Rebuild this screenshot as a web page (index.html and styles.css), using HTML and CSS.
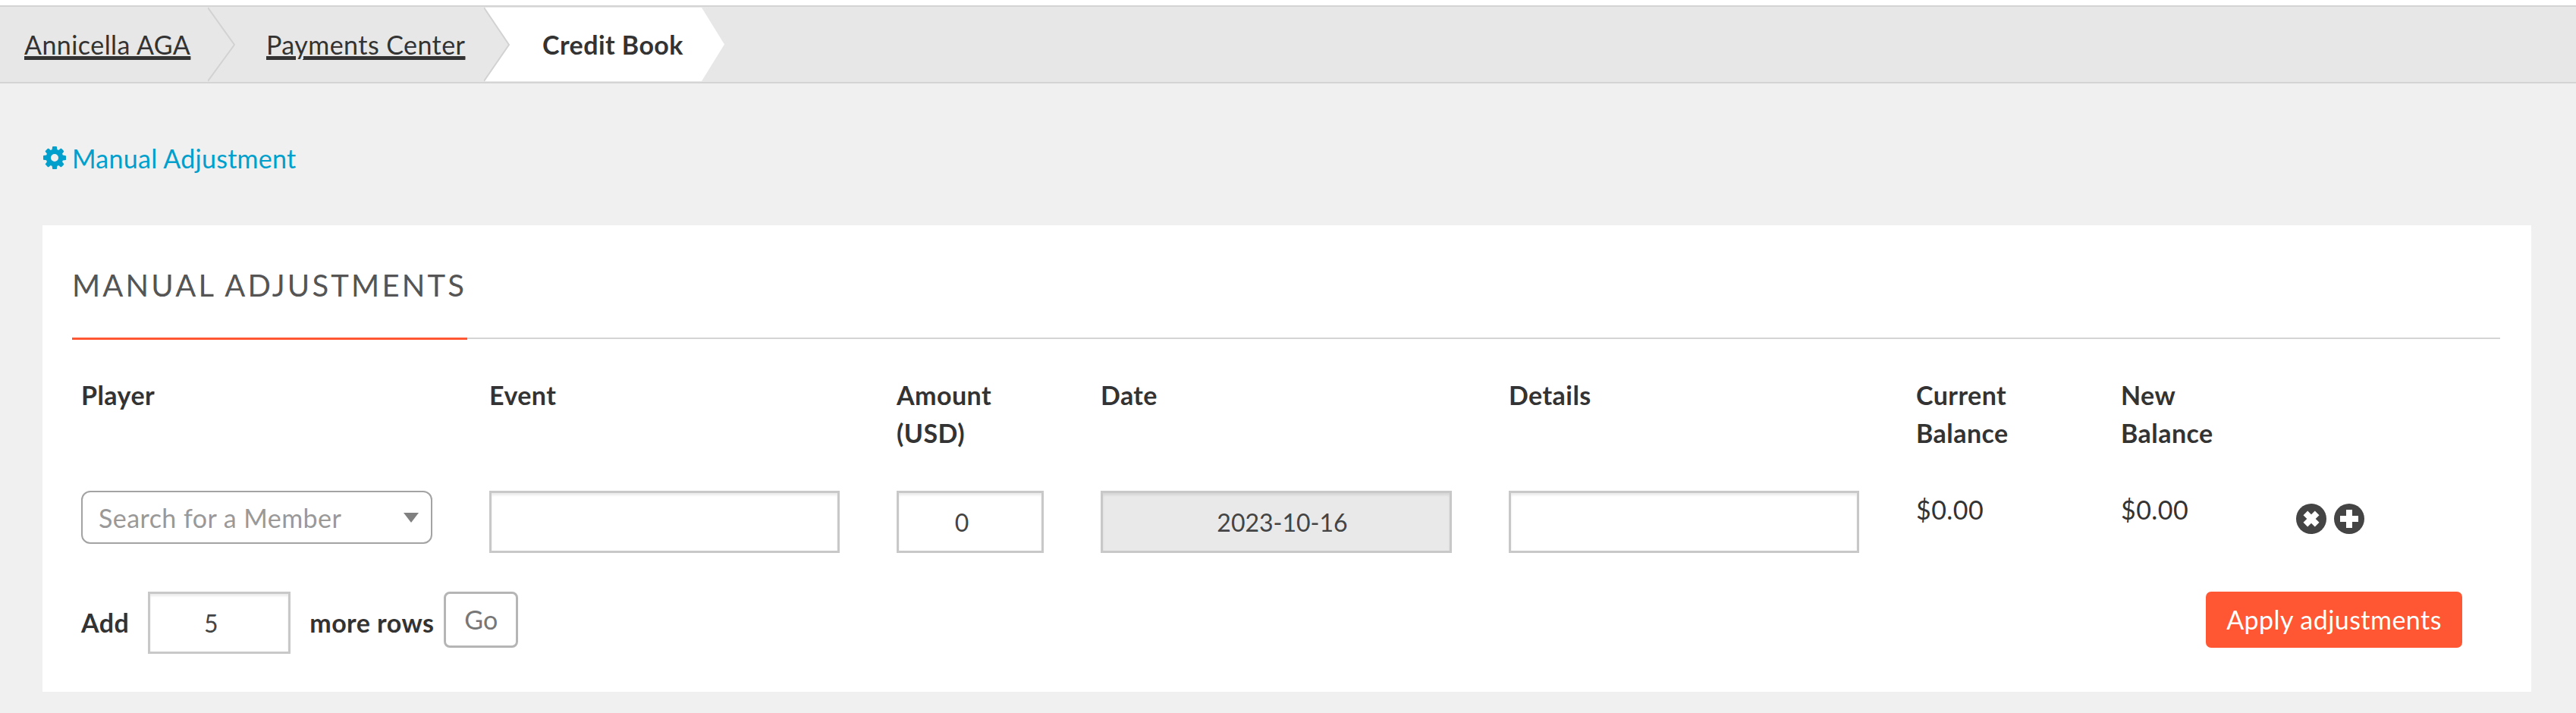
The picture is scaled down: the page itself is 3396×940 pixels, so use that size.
FILE: index.html
```html
<!DOCTYPE html>
<html lang="en">
<head>
<meta charset="utf-8">
<title>Credit Book</title>
<link rel="stylesheet" href="styles.css">
</head>
<body>
<nav class="crumbs">
  <a class="crumb crumb-first" href="#"><span class="crumb-text">Annicella AGA</span>
    <svg class="sep" viewBox="0 0 36 99" width="36" height="99"><path d="M0 1 L35 50 L0 98" fill="none" stroke="#d2d2d2" stroke-width="2"/></svg></a>
  <a class="crumb crumb-second" href="#"><span class="crumb-text">Payments Center</span>
    <svg class="sep" viewBox="0 0 36 99" width="36" height="99"><path d="M0 1 L33 50 L0 98" fill="none" stroke="#d2d2d2" stroke-width="2"/></svg></a>
  <span class="crumb-active">Credit Book</span>
</nav>
<main class="page">
  <a class="manual-link" href="#">
    <svg class="gear" viewBox="128 128 1536 1536" width="30" height="30"><path fill="currentColor" d="M1152 896q0-106-75-181t-181-75-181 75-75 181 75 181 181 75 181-75 75-181zm512-109v222q0 12-8 23t-20 13l-185 28q-19 54-39 91 35 50 107 138 10 12 10 25t-9 23q-27 37-99 108t-94 71q-12 0-26-9l-138-108q-44 23-91 38-16 136-29 186-7 28-36 28h-222q-14 0-24.5-8.5t-11.5-21.5l-28-184q-49-16-90-37l-141 107q-10 9-25 9-14 0-25-11-126-114-165-168-7-10-7-23 0-12 8-23 15-21 51-66.5t54-70.5q-27-50-41-99l-183-27q-13-2-21-12.5t-8-23.5v-222q0-12 8-23t19-13l186-28q14-46 39-92-40-57-107-138-10-12-10-24 0-10 9-23 26-36 98.5-107.5t94.5-71.5q13 0 26 10l138 107q44-23 91-38 16-136 29-186 7-28 36-28h222q14 0 24.5 8.5t11.5 21.5l28 184q49 16 90 37l142-107q9-9 24-9 13 0 25 10 129 119 165 170 7 8 7 22 0 12-8 23-15 21-51 66.5t-54 70.5q26 50 41 98l183 28q13 2 21 12.5t8 23.5z"/></svg>
    <span class="manual-text">Manual Adjustment</span>
  </a>
  <section class="card">
    <div class="title-rule"><h2 class="title">MANUAL ADJUSTMENTS</h2></div>
    <div class="grid grid-head">
      <div class="label">Player</div>
      <div class="label">Event</div>
      <div class="label">Amount<br>(USD)</div>
      <div class="label">Date</div>
      <div class="label">Details</div>
      <div class="label">Current<br>Balance</div>
      <div class="label">New<br>Balance</div>
      <div></div>
    </div>
    <div class="grid grid-row">
      <div class="select"><span class="select-text">Search for a Member</span><span class="select-arrow"></span></div>
      <input class="field" type="text" value="">
      <input class="field field-small field-num" type="text" value="0">
      <input class="field field-date" type="text" value="2023-10-16" disabled>
      <input class="field" type="text" value="">
      <div class="money">$0.00</div>
      <div class="money">$0.00</div>
      <div class="actions">
        <svg class="round-icon" viewBox="0 0 40 40" width="40" height="40"><circle cx="20" cy="20" r="20" fill="#444"/><path fill="#fff" d="M9.5 15.2l5.7-5.7L20 14.3l4.8-4.8 5.7 5.7-4.8 4.8 4.8 4.8-5.7 5.7-4.8-4.8-4.8 4.8-5.7-5.7 4.8-4.8z"/></svg>
        <svg class="round-icon" viewBox="0 0 40 40" width="40" height="40"><circle cx="20" cy="20" r="20" fill="#444"/><path fill="#fff" d="M16 8h8v8h8v8h-8v8h-8v-8H8v-8h8z"/></svg>
      </div>
    </div>
    <div class="add-row">
      <span class="label add-label">Add</span>
      <input class="field field-rows" type="text" value="5">
      <span class="label more-label">more rows</span>
      <button class="go" type="button">Go</button>
      <button class="apply" type="button">Apply adjustments</button>
    </div>
  </section>
</main>
</body>
</html>
```
FILE: styles.css
```css
* { box-sizing: border-box; }
html, body { margin: 0; padding: 0; }
body {
  background: #f0f0f0;
  color: #333;
  font-family: "Lato", "Open Sans", sans-serif;
  font-size: 34px;
  letter-spacing: 0.45px;
  height: 940px;
  overflow: hidden;
  padding-top: 7px;
  box-shadow: inset 0 7px 0 #fff;
}
.crumbs {
  display: flex;
  height: 103px;
  background: #e7e7e7;
  border-top: 2px solid #d4d4d4;
  border-bottom: 2px solid #d4d4d4;
}
.crumb {
  position: relative;
  display: flex;
  align-items: center;
  color: #333;
  height: 99px;
}
.crumb-first { width: 274px; padding-left: 32px; }
.crumb-second { width: 364px; padding-left: 77px; }
.crumb-text {
  text-decoration: underline;
  text-decoration-thickness: 3px;
  text-underline-offset: 4px;
  white-space: nowrap;
}
.sep { position: absolute; left: 100%; top: 0; z-index: 1; }
.crumb-active {
  display: flex;
  align-items: center;
  width: 317px;
  height: 97px;
  margin-top: 1px;
  padding-left: 77px;
  background: #fff;
  font-weight: 700;
  white-space: nowrap;
  clip-path: polygon(0 0, 287px 0, 317px 50%, 287px 100%, 0 100%, 33px 50%);
}
.page { padding: 0 59px 0 56px; }
.manual-link {
  display: flex;
  align-items: center;
  gap: 8px;
  height: 32px;
  margin-top: 82px;
  padding-left: 1px;
  color: #009fcc;
  text-decoration: none;
}
.gear { display: block; flex: none; }
.manual-text { letter-spacing: 0.27px; }
.card {
  background: #fff;
  height: 615px;
  margin-top: 73px;
  padding: 0 41px 0 39px;
}
.title-rule {
  height: 150px;
  border-bottom: 2px solid #d4d4d4;
}
.title {
  display: inline-block;
  height: 151px;
  margin: 0;
  padding-top: 55px;
  padding-right: 1px;
  border-bottom: 3px solid #ff5733;
  color: #555;
  font-size: 40px;
  font-weight: 400;
  line-height: 48px;
  letter-spacing: 3.2px;
}
.grid {
  display: grid;
  grid-template-columns: 538px 537px 269px 538px 537px 270px 231px auto;
  padding-left: 12px;
}
.grid-head { margin-top: 49px; height: 151px; }
.grid-row { height: 133px; }
.label { font-weight: 700; line-height: 50px; }
.select {
  display: flex;
  align-items: center;
  justify-content: space-between;
  width: 463px;
  height: 70px;
  padding: 0 16px 0 21px;
  border: 2px solid #a3a3a3;
  border-radius: 12px;
  color: #999;
}
.select-arrow {
  width: 0;
  height: 0;
  border-left: 10px solid transparent;
  border-right: 10px solid transparent;
  border-top: 13px solid #808080;
}
.field {
  display: block;
  width: 462px;
  height: 82px;
  padding: 0 12px;
  border: 3px solid #c8c8c8;
  border-radius: 0;
  box-shadow: inset 0 3px 3px rgba(0, 0, 0, .08);
  background: #fff;
  color: #444;
  font: 400 32px "Lato", "Open Sans", sans-serif;
  text-align: center;
  outline: 0;
}
.field-small { width: 194px; }
.field-num { padding-right: 34px; }
.field-date { width: 463px; background: #e9e9e9; padding-left: 28px; padding-right: 12px; opacity: 1; color: #444; }
.field-rows { width: 188px; padding-right: 34px; margin-left: 25px; }
.money { line-height: 50px; }
.actions { display: flex; gap: 10px; padding-top: 17px; }
.round-icon { display: block; }
.add-row {
  display: flex;
  align-items: flex-start;
  padding: 0 50px 0 12px;
}
.add-label { line-height: 82px; }
.more-label { line-height: 82px; margin-left: 25px; }
.go {
  width: 98px;
  height: 74px;
  margin-left: 13px;
  padding: 0 0 2px;
  border: 3px solid #b5b5b5;
  border-radius: 8px;
  background: #fff;
  color: #777;
  font: 400 34px "Lato", "Open Sans", sans-serif;
}
.apply {
  width: 338px;
  height: 74px;
  margin-left: auto;
  padding: 0 0 2px;
  border: 0;
  border-radius: 7px;
  background: #ff5733;
  color: #fff;
  font: 400 34px "Lato", "Open Sans", sans-serif;
  letter-spacing: 0.45px;
}
```
